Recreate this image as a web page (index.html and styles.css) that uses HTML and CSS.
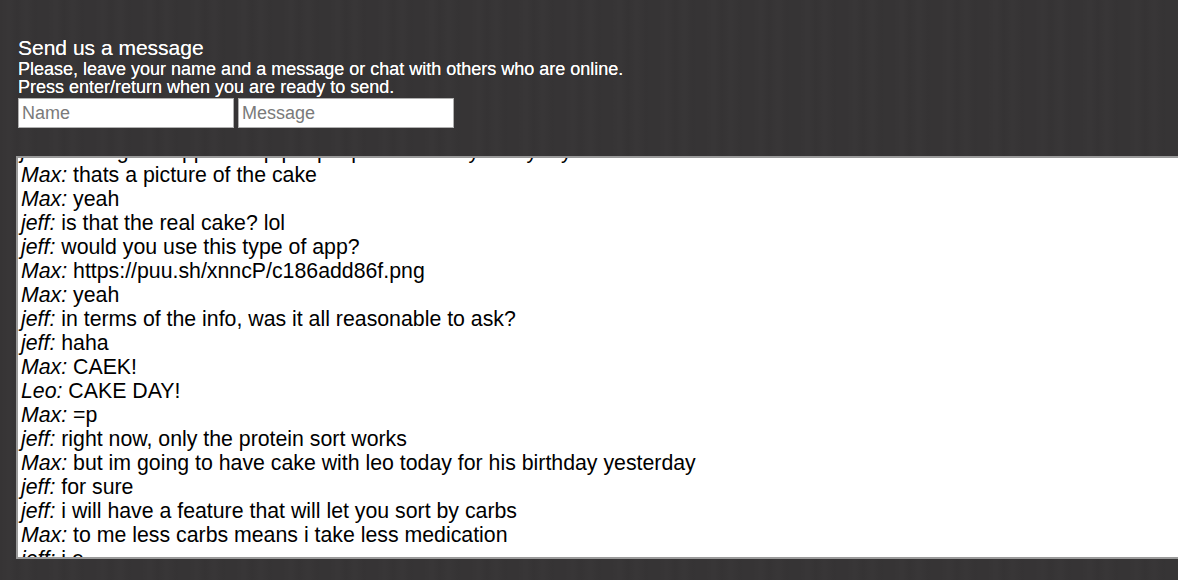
FILE: index.html
```html
<!DOCTYPE html>
<html>
<head>
<meta charset="utf-8">
<link rel="stylesheet" href="styles.css">
</head>
<body>
<div class="page">
  <div class="intro">
    <h1 class="title">Send us a message</h1>
    <p class="lead">Please, leave your name and a message or chat with others who are online.<br>Press enter/return when you are ready to send.</p>
    <div class="fields">
      <input class="field" type="text" placeholder="Name">
      <input class="field" type="text" placeholder="Message">
    </div>
  </div>
  <div class="chat">
    <div class="log">
      <div class="msg"><i>jeff:</i> it is a good app to help people plan their day everyday</div>
      <div class="msg"><i>Max:</i> thats a picture of the cake</div>
      <div class="msg"><i>Max:</i> yeah</div>
      <div class="msg"><i>jeff:</i> is that the real cake? lol</div>
      <div class="msg"><i>jeff:</i> would you use this type of app?</div>
      <div class="msg"><i>Max:</i> https://puu.sh/xnncP/c186add86f.png</div>
      <div class="msg"><i>Max:</i> yeah</div>
      <div class="msg"><i>jeff:</i> in terms of the info, was it all reasonable to ask?</div>
      <div class="msg"><i>jeff:</i> haha</div>
      <div class="msg"><i>Max:</i> CAEK!</div>
      <div class="msg"><i>Leo:</i> CAKE DAY!</div>
      <div class="msg"><i>Max:</i> =p</div>
      <div class="msg"><i>jeff:</i> right now, only the protein sort works</div>
      <div class="msg"><i>Max:</i> but im going to have cake with leo today for his birthday yesterday</div>
      <div class="msg"><i>jeff:</i> for sure</div>
      <div class="msg"><i>jeff:</i> i will have a feature that will let you sort by carbs</div>
      <div class="msg"><i>Max:</i> to me less carbs means i take less medication</div>
      <div class="msg"><i>jeff:</i> i.e.</div>
    </div>
  </div>
</div>
</body>
</html>
```
FILE: styles.css
```css
html, body {
  margin: 0;
  padding: 0;
  height: 100%;
  overflow: hidden;
}
body {
  background-color: #363435;
  background-image: repeating-linear-gradient(90deg,
    rgba(255,255,255,0.00) 0px,
    rgba(255,255,255,0.012) 9px,
    rgba(0,0,0,0.015) 17px,
    rgba(255,255,255,0.01) 26px,
    rgba(0,0,0,0.01) 35px,
    rgba(255,255,255,0.00) 47px);
  font-family: "Liberation Sans", Arial, sans-serif;
}
.page {
  padding: 36px 0 0 16px;
}
.intro {
  padding-left: 2px;
}
.title {
  margin: 0;
  font-size: 21px;
  font-weight: normal;
  line-height: 24px;
  color: #ffffff;
  text-shadow: 0 0 0.5px rgba(255,255,255,0.8);
}
.lead {
  margin: 0;
  font-size: 18px;
  line-height: 18px;
  color: #ffffff;
  text-shadow: 0 0 0.6px rgba(255,255,255,0.9);
}
.fields {
  display: flex;
  gap: 4px;
  margin-top: 2px;
}
.field {
  box-sizing: border-box;
  width: 216px;
  height: 30px;
  margin: 0;
  padding: 0 3px;
  border: 1px solid #b0b0b0;
  box-shadow: inset 0 0 0 1px #ffffff;
  background: #ffffff;
  font-family: "Liberation Sans", Arial, sans-serif;
  font-size: 18px;
  color: #000;
  outline: none;
}
.field::placeholder {
  color: #7a7a7a;
}
.chat {
  box-sizing: border-box;
  margin-top: 28px;
  width: calc(100% + 40px);
  height: 403px;
  border: 2px solid #9a9a9a;
  background: #ffffff;
  overflow: hidden;
}
.log {
  margin-top: -19px;
  padding-left: 3px;
}
.msg {
  font-size: 21.3px;
  line-height: 24px;
  color: #000000;
  white-space: nowrap;
}
.msg i {
  font-style: italic;
}
```
